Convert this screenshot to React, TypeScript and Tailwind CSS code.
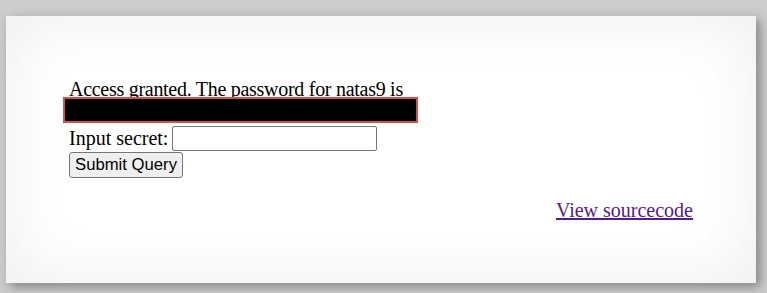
export default function App() {
  return (
    <div className="min-h-screen w-full bg-[#cccccc] pt-[16px] pl-[6px]">
      <div
        className="relative h-[267px] w-[750px] bg-white pl-[57px] pr-[63px] pt-[62px] text-[20px] leading-[23px] text-black shadow-[inset_0_0_70px_rgba(0,0,0,0.07),4px_4px_10px_rgba(0,0,0,0.35)]"
        style={{ fontFamily: '"Liberation Serif", "Times New Roman", serif' }}
      >
        <div className="pl-[6px] tracking-[-0.28px]">Access granted. The password for natas9 is</div>
        <div className="relative h-[23px]">
          <div className="absolute left-0 top-[-4px] h-[26px] w-[355px] border-2 border-[#d84e4e] bg-black" />
        </div>
        <form className="pl-[6px]" onSubmit={(e) => e.preventDefault()}>
          <div className="mt-[1px] flex h-[27px] items-center">
            <span>Input secret:</span>
            <input
              type="text"
              className="ml-[4px] h-[25px] w-[205px] rounded-[2px] border border-[#767676] bg-white px-1 outline-none"
            />
          </div>
          <button
            type="submit"
            className="h-[26px] rounded-[3px] border border-[#767676] bg-[#efefef] px-[5px] text-[16.7px] leading-none text-black"
            style={{ fontFamily: '"Liberation Sans", Arial, sans-serif' }}
          >
            Submit Query
          </button>
        </form>
        <div className="mt-[21px] text-right">
          <a href="#" className="text-[#551a8b] underline">
            View sourcecode
          </a>
        </div>
      </div>
    </div>
  );
}
